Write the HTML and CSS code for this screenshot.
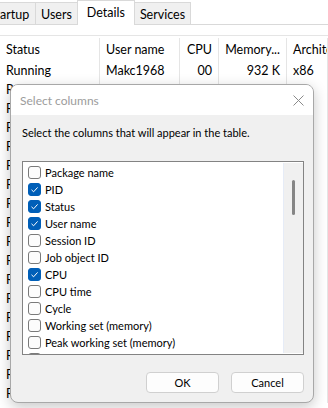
FILE: index.html
```html
<!DOCTYPE html>
<html lang="en">
<head>
    <meta charset="UTF-8">
    <title>Details - Select columns</title>
    <link rel="stylesheet" href="styles.css">
</head>
<body>
<div class="window">
    <div class="tabs">
        <div class="tab tab-first">Startup</div>
        <div class="tab">Users</div>
        <div class="tab active">Details</div>
        <div class="tab">Services</div>
    </div>

    <div class="table">
        <div class="row head">
            <div class="cell">Status</div>
            <div class="cell">User name</div>
            <div class="cell num">CPU</div>
            <div class="cell num">Memory...</div>
            <div class="cell">Architecture</div>
        </div>
        <div class="row">
            <div class="cell">Running</div>
            <div class="cell">Makc1968</div>
            <div class="cell num">00</div>
            <div class="cell num">932 K</div>
            <div class="cell">x86</div>
        </div>
        <div class="row"><div class="cell">Running</div><div class="cell"></div><div class="cell"></div><div class="cell"></div><div class="cell"></div></div>
        <div class="row"><div class="cell">Running</div><div class="cell"></div><div class="cell"></div><div class="cell"></div><div class="cell"></div></div>
        <div class="row"><div class="cell">Running</div><div class="cell"></div><div class="cell"></div><div class="cell"></div><div class="cell"></div></div>
        <div class="row"><div class="cell">Running</div><div class="cell"></div><div class="cell"></div><div class="cell"></div><div class="cell"></div></div>
        <div class="row"><div class="cell">Running</div><div class="cell"></div><div class="cell"></div><div class="cell"></div><div class="cell"></div></div>
        <div class="row"><div class="cell">Running</div><div class="cell"></div><div class="cell"></div><div class="cell"></div><div class="cell"></div></div>
        <div class="row"><div class="cell">Running</div><div class="cell"></div><div class="cell"></div><div class="cell"></div><div class="cell"></div></div>
        <div class="row"><div class="cell">Running</div><div class="cell"></div><div class="cell"></div><div class="cell"></div><div class="cell"></div></div>
        <div class="row"><div class="cell">Running</div><div class="cell"></div><div class="cell"></div><div class="cell"></div><div class="cell"></div></div>
        <div class="row"><div class="cell">Running</div><div class="cell"></div><div class="cell"></div><div class="cell"></div><div class="cell"></div></div>
        <div class="row"><div class="cell">Running</div><div class="cell"></div><div class="cell"></div><div class="cell"></div><div class="cell"></div></div>
        <div class="row"><div class="cell">Running</div><div class="cell"></div><div class="cell"></div><div class="cell"></div><div class="cell"></div></div>
        <div class="row"><div class="cell">Running</div><div class="cell"></div><div class="cell"></div><div class="cell"></div><div class="cell"></div></div>
        <div class="row"><div class="cell">Running</div><div class="cell"></div><div class="cell"></div><div class="cell"></div><div class="cell"></div></div>
        <div class="row"><div class="cell">Running</div><div class="cell"></div><div class="cell"></div><div class="cell"></div><div class="cell"></div></div>
        <div class="row"><div class="cell">Running</div><div class="cell"></div><div class="cell"></div><div class="cell"></div><div class="cell"></div></div>
        <div class="row"><div class="cell">Running</div><div class="cell"></div><div class="cell"></div><div class="cell"></div><div class="cell"></div></div>
    </div>

    <div class="dialog">
        <div class="dialog-title">
            <span>Select columns</span>
            <svg class="close" width="11" height="11" viewBox="0 0 11 11">
                <path d="M0.5 0.5 L10.5 10.5 M10.5 0.5 L0.5 10.5" stroke="#8a8a8a" stroke-width="1" fill="none"/>
            </svg>
        </div>
        <div class="dialog-body">
            <p class="hint">Select the columns that will appear in the table.</p>
            <div class="listbox">
                <div class="items">
                    <label class="item"><span class="box"></span>Package name</label>
                    <label class="item"><span class="box checked"></span>PID</label>
                    <label class="item"><span class="box checked"></span>Status</label>
                    <label class="item"><span class="box checked"></span>User name</label>
                    <label class="item"><span class="box"></span>Session ID</label>
                    <label class="item"><span class="box"></span>Job object ID</label>
                    <label class="item"><span class="box checked"></span>CPU</label>
                    <label class="item"><span class="box"></span>CPU time</label>
                    <label class="item"><span class="box"></span>Cycle</label>
                    <label class="item"><span class="box"></span>Working set (memory)</label>
                    <label class="item"><span class="box"></span>Peak working set (memory)</label>
                    <label class="item"><span class="box"></span>Working set delta (memory)</label>
                </div>
                <div class="scrollbar">
                    <div class="thumb"></div>
                </div>
            </div>
            <div class="buttons">
                <button class="btn">OK</button>
                <button class="btn">Cancel</button>
            </div>
        </div>
    </div>
</div>
</body>
</html>
```

FILE: styles.css
```css
:root {
    --line: #e5e5e5;
    --tab-border: #d9d9d9;
    --dlg-bg: #f0f0f0;
    --accent: #005fb8;
}

* {
    box-sizing: border-box;
}

body {
    margin: 0;
    font-family: Lato, "Noto Sans", sans-serif;
    font-size: 12.5px;
    color: #000;
    background: #fff;
    overflow: hidden;
}

.window {
    position: relative;
    width: 328px;
    height: 408px;
    overflow: hidden;
}

/* tab strip */
.tabs {
    display: flex;
    align-items: flex-end;
    height: 25px;
    border-bottom: 1px solid var(--tab-border);
}

.tab {
    height: 22px;
    line-height: 23px;
    padding: 0 5px;
    background: #f0f0f0;
    border: 1px solid var(--tab-border);
    border-bottom: none;
    margin-right: -1px;
}

/* the strip is scrolled, so the first tab is cut at the left edge */
.tab-first {
    width: 49px;
    margin-left: -13px;
    padding: 0 0 0 1px;
    overflow: hidden;
    white-space: nowrap;
}

.tab.active {
    height: 25px;
    margin-bottom: -1px;
    background: #fff;
    padding: 0 9px;
    line-height: 23px;
    position: relative;
}

/* process table */
.table {
    margin-top: 10px;
    border-top: 1px solid var(--line);
}

.row {
    display: grid;
    grid-template-columns: 100px 80px 39px 68px 1fr;
    height: 19px;
    line-height: 20px;
}

.row.head {
    height: 25px;
    padding-top: 2px;
    line-height: 23px;
}

.cell {
    padding: 0 6px;
    border-right: 1px solid var(--line);
    white-space: nowrap;
    overflow: hidden;
}

.cell.num {
    text-align: right;
}

/* dialog */
.dialog {
    position: absolute;
    left: 10px;
    top: 84px;
    width: 304px;
    height: 319px;
    background: var(--dlg-bg);
    border: 1px solid #a8a8a8;
    border-radius: 8px;
    overflow: hidden;
    box-shadow: 0 4px 14px rgba(0, 0, 0, 0.22);
    display: flex;
    flex-direction: column;
    font-size: 11px;
}

.dialog-title {
    height: 30px;
    background: #fff;
    display: flex;
    align-items: center;
    justify-content: space-between;
    padding: 0 9px 0 9px;
    color: #9c9c9c;
    font-size: 12px;
}

.dialog-body {
    padding: 10px 9px 9px 11px;
    display: flex;
    flex-direction: column;
}

.hint {
    margin: 0;
    line-height: 16px;
}

.listbox {
    margin-top: 20px;
    height: 194px;
    border: 1px solid #838383;
    background: #fff;
    display: flex;
    overflow: hidden;
}

.items {
    flex: 1;
    padding: 2px 0 0 5px;
}

.item {
    display: flex;
    align-items: center;
    gap: 4px;
    height: 17px;
    white-space: nowrap;
}

.box {
    width: 13px;
    height: 13px;
    border: 1px solid #7a7a7a;
    border-radius: 3px;
    background: #fcfcfc;
    flex: none;
}

.box.checked {
    border-color: var(--accent);
    background: var(--accent) url("data:image/svg+xml,%3Csvg xmlns='http://www.w3.org/2000/svg' width='11' height='11' viewBox='0 0 11 11'%3E%3Cpath d='M2.5 5.8 L4.6 7.8 L8.6 3.4' stroke='white' stroke-width='1' fill='none'/%3E%3C/svg%3E") center no-repeat;
}

.scrollbar {
    width: 20px;
    margin: 1px 0;
    background: #f0f0f0;
    border-left: 1px solid #e6ecf7;
    position: relative;
}

.thumb {
    position: absolute;
    left: 8px;
    top: 17px;
    width: 3px;
    height: 35px;
    border-radius: 2px;
    background: #858585;
}

.buttons {
    display: flex;
    justify-content: flex-end;
    gap: 12px;
    margin-top: 17px;
}

.btn {
    width: 73px;
    height: 21px;
    font: inherit;
    color: #000;
    background: #fdfdfd;
    border: 1px solid #d0d0d0;
    border-radius: 4px;
    padding: 0;
}
```
